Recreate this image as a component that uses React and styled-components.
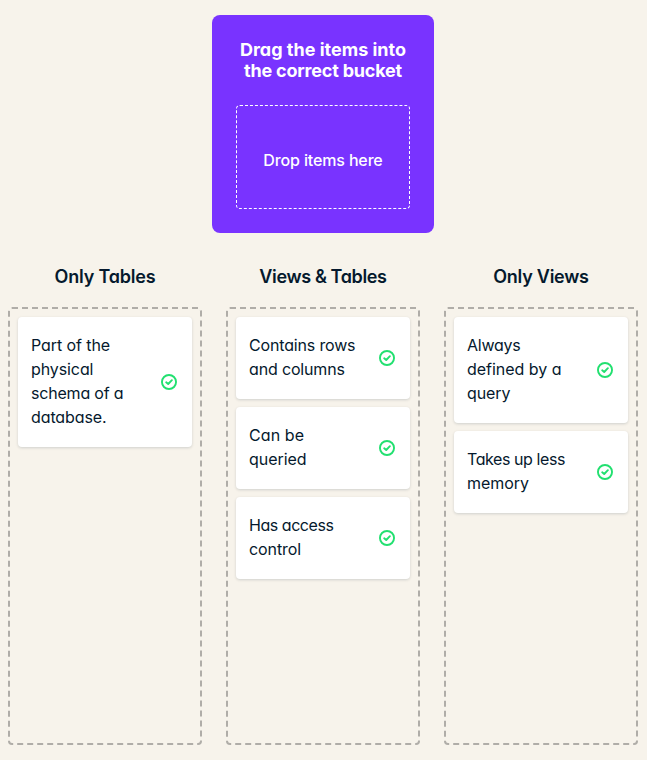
import React from "react";
import styled, { createGlobalStyle } from "styled-components";

const GlobalStyle = createGlobalStyle`
  * { box-sizing: border-box; }
  body {
    margin: 0;
    background: #f7f3eb;
    color: #05192d;
    font: 400 16px/24px Inter, "Open Sans", sans-serif;
    font-feature-settings: "cv11";
  }
`;

const Page = styled.main`
  display: flex;
  flex-direction: column;
  align-items: center;
  width: 647px;
  height: 760px;
  padding: 15px 9px 15px 8px;
  overflow: hidden;
`;

const Prompt = styled.section`
  display: flex;
  flex-direction: column;
  gap: 24px;
  width: 222px;
  height: 218px;
  padding: 24px;
  border-radius: 8px;
  background: #7933ff;
  color: #fff;
`;

const PromptTitle = styled.h1`
  margin: 0;
  height: 42px;
  font-size: 18px;
  font-weight: 700;
  line-height: 21px;
  text-align: center;
  white-space: nowrap;
`;

const DropZone = styled.div`
  display: flex;
  align-items: center;
  justify-content: center;
  height: 104px;
  padding-top: 6px;
  border: 1px dashed #fff;
  border-radius: 4px;
  font-weight: 500;
`;

const Buckets = styled.div`
  display: grid;
  grid-template-columns: repeat(3, 194px);
  gap: 24px;
  margin-top: 32px;
`;

const Bucket = styled.section`
  display: flex;
  flex-direction: column;
`;

const BucketTitle = styled.h2`
  margin: 0 0 18px;
  font-size: 18px;
  font-weight: 600;
  line-height: 24px;
  text-align: center;
`;

const BucketBody = styled.div`
  display: flex;
  flex-direction: column;
  gap: 8px;
  height: 438px;
  padding: 8px;
  border: 2px dashed #b0ada8;
  border-radius: 4px;
`;

const Card = styled.article`
  display: flex;
  align-items: center;
  justify-content: space-between;
  padding: 16px 15px 16px 13px;
  border-radius: 4px;
  background: #fff;
  box-shadow: 0 1px 3px rgba(5, 25, 45, 0.16);
`;

const CardText = styled.div`
  padding-bottom: 2px;
`;

const Line = styled.span`
  display: block;
  white-space: nowrap;
  letter-spacing: ${({ $tracking = 0 }) => $tracking}px;
`;

const Icon = styled.svg`
  flex: none;
  width: 16px;
  height: 16px;
`;

const CheckIcon = () => (
  <Icon viewBox="0 0 16 16" fill="none" stroke="#22e070" strokeWidth="1.9">
    <circle cx="8" cy="8" r="7.05" />
    <path d="M5.2 8.3 7.2 10 10.9 6.2" strokeLinecap="round" strokeLinejoin="round" />
  </Icon>
);

const buckets = [
  {
    title: ["Only Tables", -0.2],
    items: [[["Part of the", -0.08], ["physical", -0.1], ["schema of a", -0.2], ["database.", -0.1]]],
  },
  {
    title: ["Views & Tables", -0.36],
    items: [
      [["Contains rows", -0.16], ["and columns", -0.16]],
      [["Can be", 0.08], ["queried", -0.05]],
      [["Has access", -0.45], ["control", -0.08]],
    ],
  },
  {
    title: ["Only Views", -0.25],
    items: [
      [["Always", -0.25], ["defined by a", -0.02], ["query", -0.08]],
      [["Takes up less", -0.42], ["memory", -0.04]],
    ],
  },
];

export default function App() {
  return (
    <>
      <GlobalStyle />
      <Page>
        <Prompt>
          <PromptTitle>
            <Line>Drag the items into</Line>
            <Line $tracking={-0.2}>the correct bucket</Line>
          </PromptTitle>
          <DropZone><Line $tracking={-0.14}>Drop items here</Line></DropZone>
        </Prompt>
        <Buckets>
          {buckets.map(({ title, items }) => (
            <Bucket key={title[0]}>
              <BucketTitle><Line $tracking={title[1]}>{title[0]}</Line></BucketTitle>
              <BucketBody>
                {items.map((lines) => (
                  <Card key={lines[0][0]}>
                    <CardText>
                      {lines.map(([text, tracking]) => (
                        <Line key={text} $tracking={tracking}>{text} </Line>
                      ))}
                    </CardText>
                    <CheckIcon />
                  </Card>
                ))}
              </BucketBody>
            </Bucket>
          ))}
        </Buckets>
      </Page>
    </>
  );
}
